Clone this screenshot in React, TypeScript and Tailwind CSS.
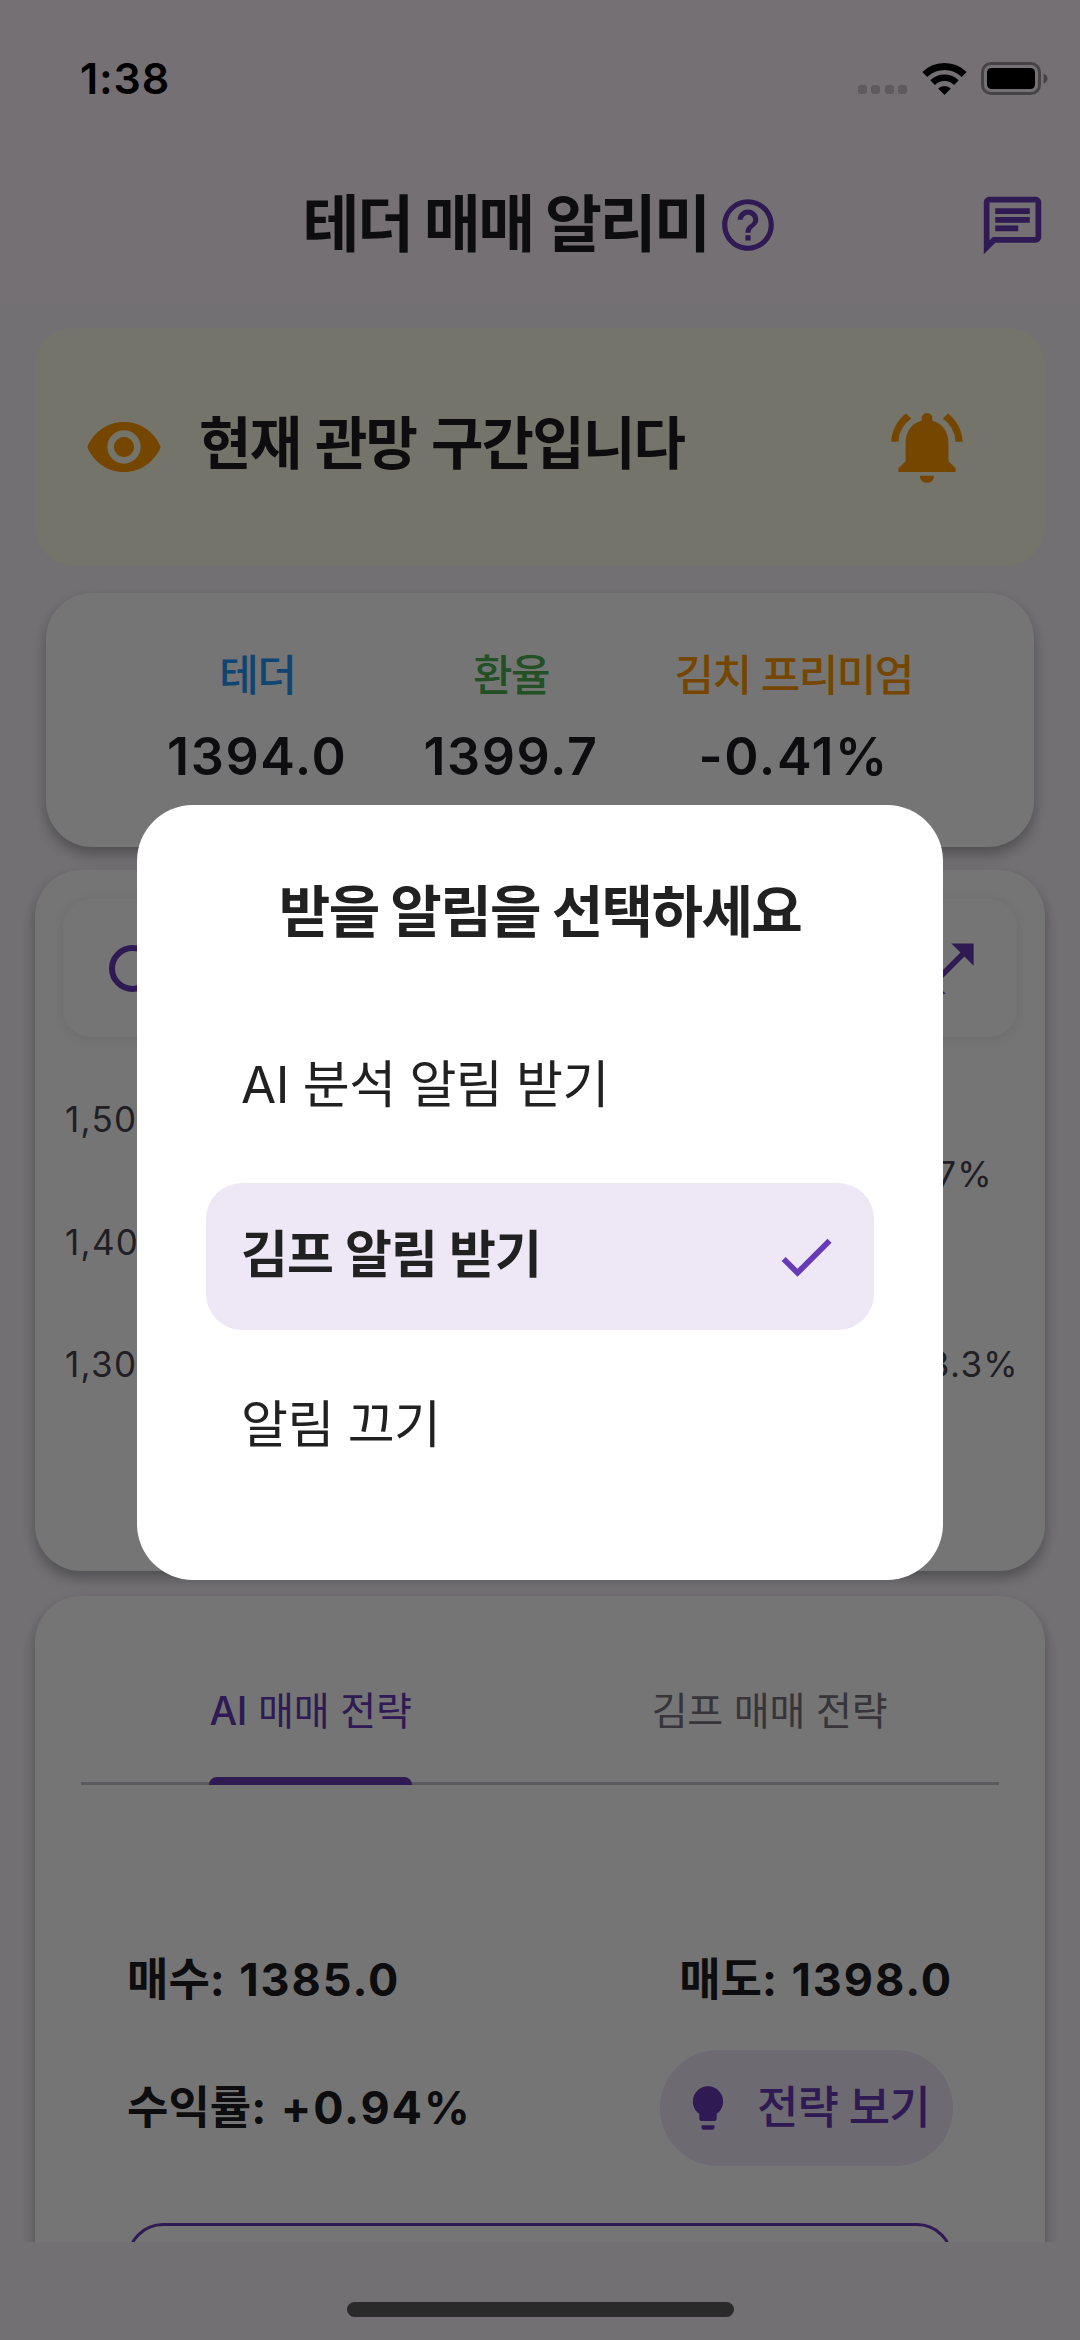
/** App — Tether trading alert home screen with the alert picker dialog open. */

import type { ReactNode } from 'react'
import {
  MdCheck,
  MdHelpOutline,
  MdLightbulb,
  MdNotificationsActive,
  MdOpenInFull,
  MdOutlineChat,
  MdVisibility,
} from 'react-icons/md'

/** Phone status bar: clock, cellular dots, wifi, battery */
function StatusBar() {
  return (
    <div className="flex h-[157px] items-center justify-between pl-[80px] pr-[32px] text-black">
      <span className="text-[43px] leading-none font-semibold tracking-[0.8px]">1:38</span>
      <div className="flex items-center">
        <div className="mt-[22px] flex gap-[4.5px]">
          {[0, 1, 2, 3].map((i) => (
            <span key={i} className="size-[9px] rounded-[3px] bg-black/20" />
          ))}
        </div>
        <svg className="ml-[15px] h-[32px] w-[45px]" viewBox="0 0 45 32" fill="none">
          <path d="M2.8 11.6a28 28 0 0 1 39.4 0" stroke="currentColor" strokeWidth="7" />
          <path d="M10.6 19.6a17 17 0 0 1 23.8 0" stroke="currentColor" strokeWidth="6.6" />
          <path d="M22.5 32l-6.3-6.4a9 9 0 0 1 12.6 0z" fill="currentColor" />
        </svg>
        <svg className="ml-[14px] h-[33px] w-[67px]" viewBox="0 0 67 33" fill="none">
          <rect x="1.5" y="1.5" width="57" height="30" rx="8.5" stroke="currentColor" strokeOpacity="0.4" strokeWidth="3" />
          <rect x="6" y="6" width="48" height="21" rx="4.5" fill="currentColor" />
          <path d="M62.5 11.5q4 1.5 4 5t-4 5z" fill="currentColor" fillOpacity="0.4" />
        </svg>
      </div>
    </div>
  )
}

function Header() {
  return (
    <header className="h-[305px] shrink-0 bg-[#fff5fd]">
      <StatusBar />
      <div className="flex h-[136px] items-center justify-between pr-[33px]">
        <span className="w-[69px]" />
        <div className="flex items-center gap-[8px] pl-[34px] text-[#1d1b20]">
          <h1 className="text-[62px] leading-none font-bold tracking-[-2.5px]">테더 매매 알리미</h1>
          <MdHelpOutline className="size-[62px] text-[#673ab7]" />
        </div>
        <MdOutlineChat className="size-[69px] text-[#673ab7]" />
      </div>
    </header>
  )
}

function Banner() {
  return (
    <section className="flex h-[237px] shrink-0 items-center rounded-[38px] bg-[#fdfde7] pl-[49px] pr-[75px]">
      <MdVisibility className="size-[80px] text-[#ff9800]" />
      <p className="ml-[35px] flex-1 pb-[7px] text-[57px] leading-none font-bold tracking-[-1.8px] text-[#1d1b20] [word-spacing:3px]">
        현재 관망 구간입니다
      </p>
      <MdNotificationsActive className="size-[86px] text-[#ff9800]" />
    </section>
  )
}

function Quote({ label, value, color }: { label: string; value: string; color: string }) {
  return (
    <div className="flex flex-col items-center">
      <span className={`text-[43px] leading-[52px] font-medium tracking-[-1.5px] ${color}`}>{label}</span>
      <span className="mt-[28px] text-[52px] leading-[56px] font-semibold tracking-[1.6px] text-[#1d1b20]">
        {value}
      </span>
    </div>
  )
}

function Quotes() {
  return (
    <section className="mx-[11px] mt-[28px] flex h-[254px] shrink-0 justify-center gap-[76px] rounded-[46px] bg-white pt-[56px] shadow-[0_7px_14px_rgba(0,0,0,0.3)]">
      <Quote label="테더" value="1394.0" color="text-[#2196f3]" />
      <Quote label="환율" value="1399.7" color="text-[#4caf50]" />
      <Quote label="김치 프리미엄" value="-0.41%" color="text-[#ff9800]" />
    </section>
  )
}

/** Price chart card: toolbar on top, price axis left, premium axis right */
function Chart() {
  return (
    <section className="mt-[23px] h-[701px] shrink-0 rounded-[46px] bg-white px-[28px] pt-[29px] text-[35px] leading-[40px] tracking-[1.3px] text-[#49454f] shadow-[0_7px_14px_rgba(0,0,0,0.3)]">
      <div className="flex h-[138px] items-center justify-between rounded-[28px] bg-white pl-[46px] pr-[35px] text-[#673ab7] shadow-[0_2px_14px_rgba(0,0,0,0.09)]">
        <span className="size-[47px] rounded-full border-[6px] border-current" />
        <MdOpenInFull className="size-[67px]" />
      </div>
      <div className="flex justify-between">
        <div className="flex flex-col gap-[82.5px] pt-[62px] pl-[2px]">
          <span>1,500</span>
          <span>1,400</span>
          <span>1,300</span>
        </div>
        <div className="flex flex-col items-end gap-[150px] pt-[117px]">
          <span className="mr-[24px]">1.7%</span>
          <span className="-mr-[2px]">-3.3%</span>
        </div>
      </div>
    </section>
  )
}

function Stat({ label, value }: { label: string; value: string }) {
  return (
    <span className="whitespace-nowrap">
      {label}
      <span className="tracking-[1.9px]">: {value}</span>
    </span>
  )
}

function Strategy() {
  return (
    <section className="mt-[25px] h-[760px] shrink-0 rounded-[46px] bg-white px-[46px] pt-[68px] text-[#1d1b20] shadow-[0_7px_14px_rgba(0,0,0,0.3)]">
      <div className="flex h-[121px] border-b-[3px] border-[#cac4d0] text-[39px] leading-[93px] tracking-[-0.2px]">
        <div className="flex flex-1 justify-center">
          <div className="relative text-[#673ab7]">
            <span className="font-medium">AI</span> 매매 전략
            <span className="absolute inset-x-0 top-[113px] h-[8px] rounded-t-[8px] bg-[#673ab7]" />
          </div>
        </div>
        <div className="flex flex-1 justify-center text-[#79747e]">김프 매매 전략</div>
      </div>

      <div className="px-[46px] text-[45px] leading-[60px] font-bold">
        <div className="mt-[165px] flex justify-between">
          <Stat label="매수" value="1385.0" />
          <Stat label="매도" value="1398.0" />
        </div>
        <div className="mt-[40px] flex items-center justify-between">
          <Stat label="수익률" value="+0.94%" />
          <button className="flex h-[116px] w-[293px] items-center rounded-full bg-[#ede7f6] pl-[22px] font-medium tracking-[-1px] text-[#673ab7]">
            <MdLightbulb className="size-[52px]" />
            <span className="ml-[23px]">전략 보기</span>
          </button>
        </div>
        <div className="mt-[57px] h-[120px] rounded-[36px] border-[3px] border-[#673ab7]" />
      </div>
    </section>
  )
}

function Option({ selected, children }: { selected?: boolean; children: ReactNode }) {
  return (
    <button
      className={`flex h-[147px] items-center justify-between rounded-[36px] pl-[35px] pr-[34px] text-[51px] leading-none ${
        selected ? 'bg-[#ede7f6] font-semibold tracking-[-0.9px]' : 'tracking-[-0.5px]'
      }`}
    >
      <span className="pb-[5px]">{children}</span>
      {selected && <MdCheck className="size-[68px] text-[#673ab7]" />}
    </button>
  )
}

/** Modal with the three alert choices */
function AlertDialog() {
  return (
    <div className="absolute inset-0 flex flex-col items-center bg-black/54 pt-[805px]">
      <div className="flex h-[775px] w-[806px] flex-col rounded-[56px] bg-white px-[69px] pt-[75px] text-[#212121]">
        <h2 className="text-center text-[56px] leading-[64px] font-bold tracking-[-1.6px]">받을 알림을 선택하세요</h2>
        <div className="mt-[69px] flex flex-col gap-[23px]">
          <Option>AI 분석 알림 받기</Option>
          <Option selected>김프 알림 받기</Option>
          <Option>알림 끄기</Option>
        </div>
      </div>
    </div>
  )
}

export default function App() {
  return (
    <div className="relative flex h-[2340px] w-[1080px] flex-col overflow-hidden bg-[#f8f4f9] font-['Inter','Noto_Sans_CJK_KR',sans-serif]">
      <Header />
      <main className="flex h-[1937px] shrink-0 flex-col overflow-hidden px-[35px] pt-[23px]">
        <Banner />
        <Quotes />
        <Chart />
        <Strategy />
      </main>
      <AlertDialog />
      <div className="absolute bottom-[23px] left-[347px] h-[15px] w-[387px] rounded-full bg-[#2a2a2a]" />
    </div>
  )
}
